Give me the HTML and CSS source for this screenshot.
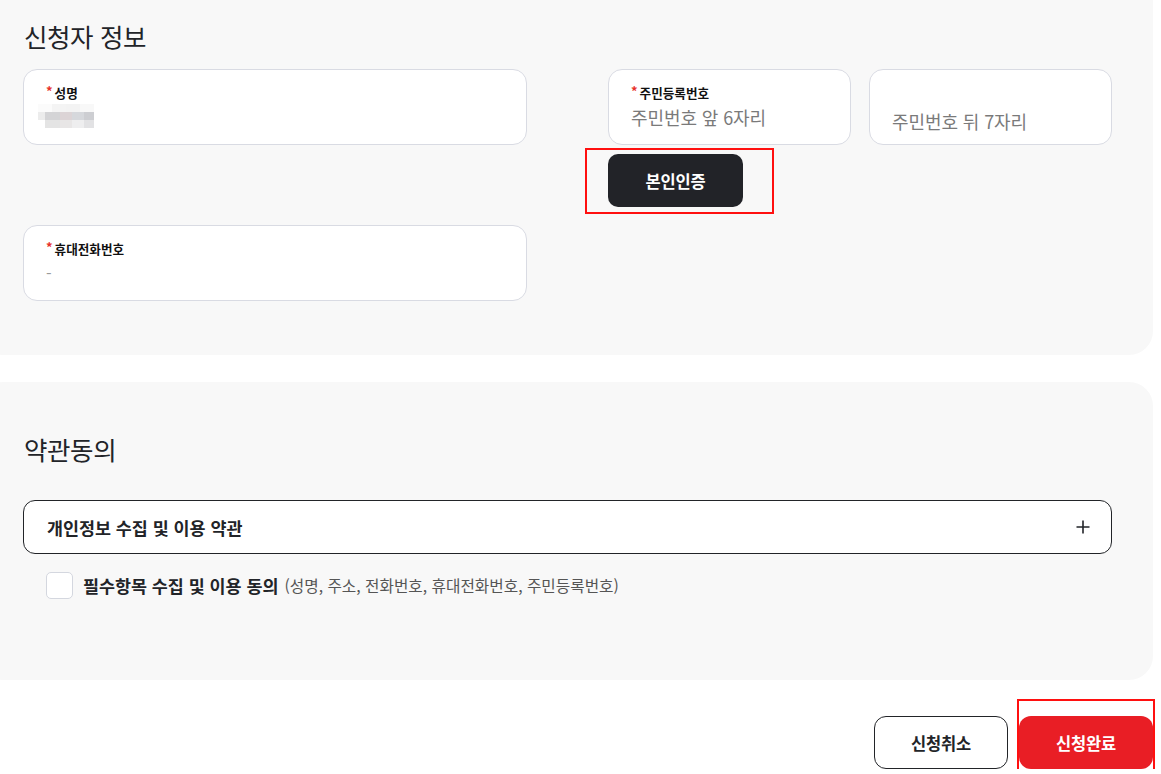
FILE: index.html
```html
<!DOCTYPE html>
<html lang="ko">
<head>
<meta charset="utf-8">
<title>신청자 정보</title>
<link rel="stylesheet" href="styles.css">
</head>
<body>
<div class="page">
  <section class="panel panel-info">
    <h2 class="panel-title">신청자 정보</h2>
    <div class="info-row">
      <div class="field field-wide">
        <div class="field-label"><span class="req">*</span>성명</div>
        <div class="field-value">
          <div class="mosaic">
            <div class="mrow mrow-1"></div>
            <div class="mrow mrow-2"></div>
            <div class="mrow mrow-3"></div>
          </div>
        </div>
      </div>
      <div class="rrn-col">
        <div class="rrn-row">
          <div class="field field-half">
            <div class="field-label"><span class="req">*</span>주민등록번호</div>
            <div class="field-value placeholder">주민번호 앞 6자리</div>
          </div>
          <div class="field field-half no-label">
            <div class="field-value placeholder">주민번호 뒤 7자리</div>
          </div>
        </div>
        <div class="verify-wrap">
          <button class="btn-verify" type="button">본인인증</button>
        </div>
      </div>
    </div>
    <div class="field field-wide field-phone">
      <div class="field-label"><span class="req">*</span>휴대전화번호</div>
      <div class="field-value dash">-</div>
    </div>
  </section>

  <section class="panel panel-terms">
    <h2 class="panel-title">약관동의</h2>
    <div class="accordion">
      <span class="accordion-title">개인정보 수집 및 이용 약관</span>
      <svg class="plus" width="14" height="14" viewBox="0 0 14 14" aria-hidden="true">
        <path d="M7 0.5V13.5M0.5 7H13.5" stroke="#222428" stroke-width="1.6" fill="none"/>
      </svg>
    </div>
    <label class="agree">
      <span class="checkbox"></span>
      <span class="agree-main">필수항목 수집 및 이용 동의</span>
      <span class="agree-sub">(성명, 주소, 전화번호, 휴대전화번호, 주민등록번호)</span>
    </label>
  </section>

  <div class="actions">
    <button class="btn btn-cancel" type="button">신청취소</button>
    <div class="submit-wrap">
      <button class="btn btn-submit" type="button">신청완료</button>
    </div>
  </div>
</div>
</body>
</html>
```

FILE: styles.css
```css
* {
  box-sizing: border-box;
}

html, body {
  margin: 0;
  padding: 0;
  background: #ffffff;
  overflow: hidden;
}

body {
  font-family: "Noto Sans CJK KR", "Noto Sans", sans-serif;
  color: #222428;
}

.page {
  width: 1153px;
}

.panel {
  margin-left: -20px;
  width: 1173px;
  background: #f8f8f8;
  border-radius: 24px;
  padding-left: 43px;
}

.panel-info {
  border-radius: 0 0 24px 24px;
  padding-top: 18px;
  padding-bottom: 54px;
}

.panel-title {
  margin: 0 0 15px 1px;
  font-size: 25.5px;
  line-height: 36px;
  font-weight: 400;
  letter-spacing: -0.4px;
  color: #222428;
}

.info-row {
  display: flex;
  align-items: flex-start;
}

.field {
  background: #ffffff;
  border: 1px solid #d9dbe3;
  border-radius: 14px;
  height: 76px;
  padding: 14px 22px 0;
}

.field-wide {
  width: 504px;
}

.field-half {
  width: 243px;
}

.field-label {
  font-size: 12.6px;
  line-height: 18px;
  font-weight: 700;
  color: #111111;
  letter-spacing: 0;
}

.req {
  color: #e8322a;
  font-size: 13px;
  margin-right: 2px;
  position: relative;
  top: -2px;
}

.field-value {
  margin-top: 2px;
  font-size: 18px;
  line-height: 26px;
  height: 26px;
}

.placeholder {
  color: #7a7a7a;
  letter-spacing: -0.1px;
}

.no-label {
  padding-top: 38px;
}

.no-label .field-value {
  margin-top: 0;
}

.dash {
  color: #9a9a9a;
  font-size: 16px;
}

.mosaic {
  margin-left: -8px;
  margin-top: 2px;
  width: 56px;
}

.mrow {
  height: 8px;
}

.mrow-1 {
  background: linear-gradient(90deg, #fbfbfb 0 25%, #f4f4f4 25% 50%, #f3f3f3 50% 75%, #f8f8f8 75% 100%);
}

.mrow-2 {
  background: linear-gradient(90deg, #ececec 0 12%, #d4d4d6 12% 40%, #dcd4d6 40% 60%, #d6d8dc 60% 82%, #cdced2 82% 100%);
}

.mrow-3 {
  background: linear-gradient(90deg, #ffffff 0 12%, #e4e4e4 12% 40%, #e8e6e6 40% 60%, #eeeeef 60% 82%, #e2e2e4 82% 100%);
}

.rrn-col {
  margin-left: 81px;
}

.rrn-row {
  display: flex;
  gap: 18px;
}

.verify-wrap {
  position: relative;
  width: 135px;
  margin-top: 9px;
}

.verify-wrap::after {
  content: "";
  position: absolute;
  left: -23px;
  right: -31px;
  top: -6px;
  bottom: -7px;
  border: 2px solid #ff1010;
  pointer-events: none;
}

.btn-verify {
  display: block;
  width: 135px;
  height: 53px;
  border: none;
  border-radius: 10px;
  background: #222328;
  color: #ffffff;
  font-family: inherit;
  font-size: 16.5px;
  font-weight: 700;
  letter-spacing: -0.2px;
}

.field-phone {
  margin-top: 18px;
}

.panel-terms {
  margin-top: 27px;
  padding-top: 49px;
  padding-bottom: 81px;
}

.panel-terms .panel-title {
  margin-bottom: 33px;
}

.accordion {
  width: 1089px;
  height: 54px;
  background: #ffffff;
  border: 1px solid #222428;
  border-radius: 12px;
  display: flex;
  align-items: center;
  justify-content: space-between;
  padding: 0 21px 0 23px;
}

.accordion-title {
  font-size: 17.4px;
  font-weight: 700;
  letter-spacing: 0;
  color: #222428;
}

.plus {
  display: block;
}

.agree {
  margin-top: 18px;
  margin-left: 23px;
  display: flex;
  align-items: center;
  height: 27px;
}

.checkbox {
  width: 27px;
  height: 27px;
  border: 1px solid #d4d7df;
  border-radius: 5px;
  background: #ffffff;
  margin-right: 10px;
  flex: none;
}

.agree-main {
  font-size: 17.4px;
  font-weight: 700;
  color: #222428;
  letter-spacing: 0;
}

.agree-sub {
  margin-left: 6px;
  font-size: 15.7px;
  color: #555555;
  letter-spacing: 0;
}

.actions {
  margin-top: 36px;
  display: flex;
  justify-content: flex-end;
  gap: 11px;
}

.btn {
  display: block;
  width: 134px;
  height: 53px;
  border-radius: 12px;
  font-family: inherit;
  font-size: 16.5px;
  font-weight: 700;
  letter-spacing: -0.2px;
}

.btn-cancel {
  background: #ffffff;
  border: 1px solid #222428;
  color: #222428;
}

.submit-wrap {
  position: relative;
}

.submit-wrap::after {
  content: "";
  position: absolute;
  left: -2px;
  right: -2px;
  top: -17px;
  bottom: -2px;
  border: 2px solid #ff1010;
  pointer-events: none;
}

.btn-submit {
  background: #e91e25;
  border: none;
  color: #ffffff;
}
```
